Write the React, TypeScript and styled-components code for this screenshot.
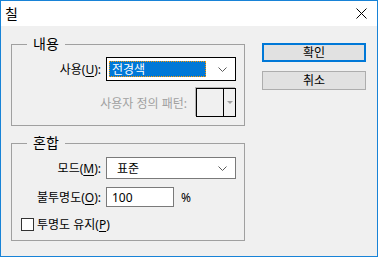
import React from 'react';
import styled, { createGlobalStyle } from 'styled-components';

const GlobalStyle = createGlobalStyle`
  html, body {
    margin: 0;
    padding: 0;
    background: #ffffff;
  }
  body {
    font-family: "Noto Sans", "Noto Sans CJK KR", sans-serif;
    font-size: 12px;
    color: #000;
  }
`;

const Window = styled.div`
  width: 378px;
  height: 257px;
  box-sizing: border-box;
  border: 1px solid #1883d7;
  display: flex;
  flex-direction: column;
  background: #f0f0f0;
`;

const TitleBar = styled.div`
  height: 25px;
  flex-shrink: 0;
  background: #ffffff;
  display: flex;
  align-items: center;
  justify-content: space-between;
  padding: 0 10px 0 4px;
`;

const Title = styled.span`
  font-size: 14px;
  line-height: 20px;
`;

const CloseIcon = () => (
  <svg width="11" height="11" viewBox="0 0 11 11">
    <path d="M0.5 0.5 L10.5 10.5 M10.5 0.5 L0.5 10.5" stroke="#000" strokeWidth="1" fill="none" />
  </svg>
);

const Body = styled.div`
  flex: 1;
  display: flex;
  gap: 17px;
  padding: 8px 0 0 10px;
`;

const LeftColumn = styled.div`
  width: 234px;
  display: flex;
  flex-direction: column;
  gap: 7px;
`;

const Group = styled.fieldset<{ $bottom: number }>`
  margin: 0;
  padding: 0 8px ${(p) => p.$bottom}px 0;
  border: 1px solid #a0a0a0;
  min-width: 0;
`;

const Legend = styled.legend`
  margin-left: 15px;
  padding: 0 6px;
  font-size: 14px;
  line-height: 20px;
`;

const FormRow = styled.div<{ $top: number }>`
  display: flex;
  align-items: center;
  margin-top: ${(p) => p.$top}px;
`;

const Label = styled.span`
  width: 89px;
  text-align: right;
  margin-right: 5px;
  white-space: nowrap;
`;

const Mnemonic = styled.u`
  text-underline-offset: 2px;
`;

const Select = styled.div<{ $focused?: boolean; $h: number }>`
  flex: 1;
  height: ${(p) => p.$h}px;
  box-sizing: border-box;
  border: 1px solid ${(p) => (p.$focused ? '#000000' : '#7a7a7a')};
  background: #ffffff;
  display: flex;
  align-items: center;
  padding: 0 8px 0 ${(p) => (p.$focused ? 2 : 7)}px;
`;

const SelectValue = styled.span<{ $focused?: boolean }>`
  flex: 1;
  height: 16px;
  line-height: 15px;
  box-sizing: border-box;
  display: flex;
  align-items: center;
  padding-left: 3px;
  margin-right: 12px;
  background: ${(p) => (p.$focused ? '#0078d7' : 'transparent')};
  color: ${(p) => (p.$focused ? '#ffffff' : '#000000')};
  outline: ${(p) => (p.$focused ? '1px dotted #ff9900' : 'none')};
  outline-offset: -1px;
`;

const Chevron = () => (
  <svg width="9" height="5" viewBox="0 0 9 5">
    <path d="M0.5 0.5 L4.5 4.5 L8.5 0.5" stroke="#5a5a5a" strokeWidth="1" fill="none" />
  </svg>
);

const PatternRow = styled.div`
  display: flex;
  align-items: center;
  justify-content: flex-end;
  gap: 9px;
  margin-top: 7px;
`;

const DisabledLabel = styled.span`
  color: #a0a0a0;
`;

const PatternPicker = styled.div`
  width: 40px;
  height: 29px;
  box-sizing: border-box;
  border: 1px solid #000;
  box-shadow: -1px -1px 0 #b4b4b4;
  display: flex;
`;

const PatternSwatch = styled.div`
  flex: 1;
  border-right: 1px solid #000;
  background: #f0f0f0;
`;

const PatternArrow = styled.div`
  width: 11px;
  display: flex;
  align-items: center;
  justify-content: center;
  &::after {
    content: '';
    border-left: 3px solid transparent;
    border-right: 3px solid transparent;
    border-top: 3px solid #a0a0a0;
  }
`;

const TextInput = styled.div`
  width: 68px;
  height: 20px;
  box-sizing: border-box;
  border: 1px solid #7a7a7a;
  background: #ffffff;
  display: flex;
  align-items: center;
  padding-left: 5px;
`;

const Unit = styled.span`
  margin-left: 7px;
`;

const CheckRow = styled.label`
  display: flex;
  align-items: center;
  gap: 3px;
  margin: 8px 0 0 9px;
`;

const CheckBox = styled.span`
  width: 13px;
  height: 13px;
  box-sizing: border-box;
  border: 1px solid #333;
  background: #ffffff;
`;

const ButtonColumn = styled.div`
  width: 104px;
  display: flex;
  flex-direction: column;
  gap: 9px;
  padding-top: 9px;
`;

const DialogButton = styled.div<{ $default?: boolean }>`
  height: 19px;
  box-sizing: border-box;
  border: ${(p) => (p.$default ? '2px solid #0078d7' : '1px solid #adadad')};
  background: #e1e1e1;
  display: flex;
  align-items: center;
  justify-content: center;
  line-height: 15px;
`;

export default function App() {
  return (
    <>
      <GlobalStyle />
      <Window>
        <TitleBar>
          <Title>칠</Title>
          <CloseIcon />
        </TitleBar>
        <Body>
          <LeftColumn>
            <Group $bottom={8}>
              <Legend>내용</Legend>
              <FormRow $top={3}>
                <Label>
                  사용(<Mnemonic>U</Mnemonic>):
                </Label>
                <Select $focused $h={24}>
                  <SelectValue $focused>전경색</SelectValue>
                  <Chevron />
                </Select>
              </FormRow>
              <PatternRow>
                <DisabledLabel>사용자 정의 패턴:</DisabledLabel>
                <PatternPicker>
                  <PatternSwatch />
                  <PatternArrow />
                </PatternPicker>
              </PatternRow>
            </Group>
            <Group $bottom={7}>
              <Legend>혼합</Legend>
              <FormRow $top={4}>
                <Label>
                  모드(<Mnemonic>M</Mnemonic>):
                </Label>
                <Select $h={22}>
                  <SelectValue>표준</SelectValue>
                  <Chevron />
                </Select>
              </FormRow>
              <FormRow $top={8}>
                <Label>
                  불투명도(<Mnemonic>O</Mnemonic>):
                </Label>
                <TextInput>100</TextInput>
                <Unit>%</Unit>
              </FormRow>
              <CheckRow>
                <CheckBox />
                <span>
                  투명도 유지(<Mnemonic>P</Mnemonic>)
                </span>
              </CheckRow>
            </Group>
          </LeftColumn>
          <ButtonColumn>
            <DialogButton $default>확인</DialogButton>
            <DialogButton>취소</DialogButton>
          </ButtonColumn>
        </Body>
      </Window>
    </>
  );
}
